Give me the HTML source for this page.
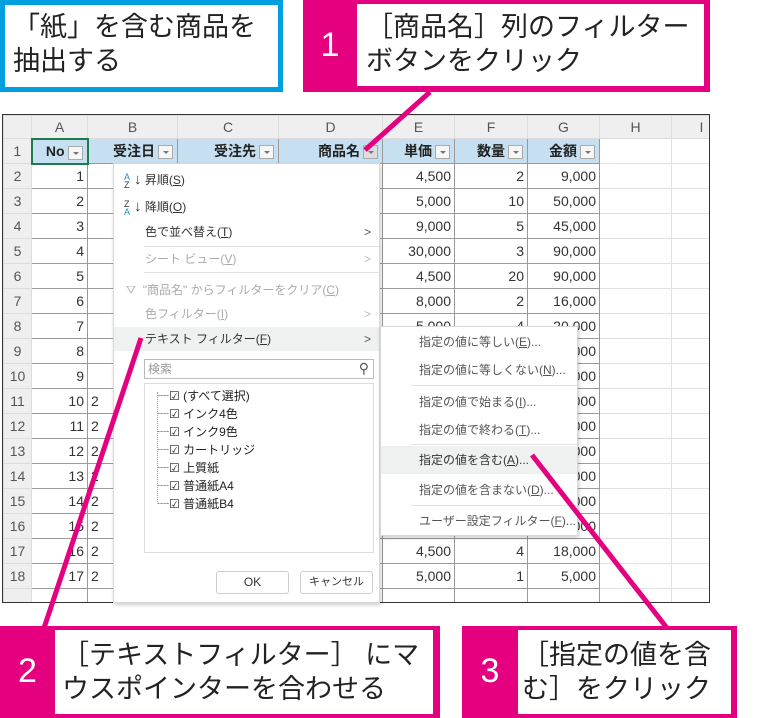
<!DOCTYPE html>
<html><head><meta charset="utf-8">
<style>
*{margin:0;padding:0;box-sizing:border-box}
body{width:783px;height:718px;background:#fff;position:relative;overflow:hidden;font-family:"Liberation Sans","Noto Sans CJK JP",sans-serif;color:#222}
.abs{position:absolute}
.sheet{position:absolute;left:2px;top:114px;width:708px;height:489px;border:1px solid #333;overflow:hidden;background:#fff}
table{border-collapse:collapse;table-layout:fixed;position:absolute;left:0;top:0;width:728px}
td{height:25px;border:1px solid #9a9a9a;font-size:14px;text-align:right;padding-right:3px;white-space:nowrap;overflow:hidden;color:#333}
tr.ch td{height:23px;background:#efefef;border:1px solid #dcdcdc;text-align:center;color:#555;font-size:14px;padding:0}
td.rh{background:#efefef;border-color:#dcdcdc;text-align:center;color:#555;padding:0}
td.e{border-color:#e2e2e2}
tr.h1 td.hd{background:#c7e0f1;font-weight:bold;color:#222;padding-right:22px;position:relative}
.fb{position:absolute;right:4px;top:6px;width:15px;height:14px;border:1px solid #aaa;background:#f6f6f6}
.fb:after{content:"";position:absolute;left:4px;top:5px;border-left:3px solid transparent;border-right:3px solid transparent;border-top:3px solid #777}
.menu{position:absolute;background:#fff;border:1px solid #d8d8d8;box-shadow:1px 2px 4px rgba(0,0,0,.2);font-size:12px;color:#333}
.it{position:absolute;left:0;right:0;height:24px;line-height:24px}
.dis{color:#aaa}
.arr{position:absolute;right:8px;top:0;color:#555;font-size:12px}
.sep{position:absolute;height:1px;background:#e2e2e2}
.co{position:absolute;font-size:27px;line-height:34px;color:#222;font-family:"Liberation Sans","Noto Sans CJK JP",sans-serif}
.num{position:absolute;color:#fff;font-size:34px;text-align:center}
</style></head><body>

<div class="abs" style="left:0;top:0;width:283px;height:92px;border:5px solid #009fe0"></div>
<div class="co" style="left:13px;top:10px">「紙」を含む商品を<br>抽出する</div>

<div class="abs" style="left:303px;top:0;width:407px;height:92px;background:#e4007f"></div>
<div class="abs" style="left:357px;top:4px;width:347px;height:82px;background:#fff"></div>
<div class="num" style="left:303px;top:26px;width:54px">1</div>
<div class="co" style="left:366px;top:10px">［商品名］列のフィルター<br>ボタンをクリック</div>

<div class="sheet">
<table>
<colgroup><col style="width:28px"><col style="width:56px"><col style="width:90px"><col style="width:101px"><col style="width:104px"><col style="width:72px"><col style="width:73px"><col style="width:72px"><col style="width:72px"><col style="width:60px"></colgroup>
<tr class="ch"><td></td><td>A</td><td>B</td><td>C</td><td>D</td><td>E</td><td>F</td><td>G</td><td>H</td><td>I</td></tr>
<tr class="h1"><td class="rh">1</td><td class="hd" style="border:2px solid #1f7a4c">No<span class="fb"></span></td><td class="hd">受注日<span class="fb"></span></td><td class="hd">受注先<span class="fb"></span></td><td class="hd">商品名<span class="fb" style="background:#ddd"></span></td><td class="hd">単価<span class="fb"></span></td><td class="hd">数量<span class="fb"></span></td><td class="hd">金額<span class="fb"></span></td><td class="e"></td><td class="e"></td></tr>
<tr><td class="rh">2</td><td>1</td><td></td><td></td><td></td><td>4,500</td><td>2</td><td>9,000</td><td class="e"></td><td class="e"></td></tr>
<tr><td class="rh">3</td><td>2</td><td></td><td></td><td></td><td>5,000</td><td>10</td><td>50,000</td><td class="e"></td><td class="e"></td></tr>
<tr><td class="rh">4</td><td>3</td><td></td><td></td><td></td><td>9,000</td><td>5</td><td>45,000</td><td class="e"></td><td class="e"></td></tr>
<tr><td class="rh">5</td><td>4</td><td></td><td></td><td></td><td>30,000</td><td>3</td><td>90,000</td><td class="e"></td><td class="e"></td></tr>
<tr><td class="rh">6</td><td>5</td><td></td><td></td><td></td><td>4,500</td><td>20</td><td>90,000</td><td class="e"></td><td class="e"></td></tr>
<tr><td class="rh">7</td><td>6</td><td></td><td></td><td></td><td>8,000</td><td>2</td><td>16,000</td><td class="e"></td><td class="e"></td></tr>
<tr><td class="rh">8</td><td>7</td><td></td><td></td><td></td><td>5,000</td><td>4</td><td>20,000</td><td class="e"></td><td class="e"></td></tr>
<tr><td class="rh">9</td><td>8</td><td></td><td></td><td></td><td></td><td></td><td>10,000</td><td class="e"></td><td class="e"></td></tr>
<tr><td class="rh">10</td><td>9</td><td></td><td></td><td></td><td></td><td></td><td>10,000</td><td class="e"></td><td class="e"></td></tr>
<tr><td class="rh">11</td><td>10</td><td style="text-align:left;padding-left:3px">2</td><td></td><td></td><td></td><td></td><td>10,000</td><td class="e"></td><td class="e"></td></tr>
<tr><td class="rh">12</td><td>11</td><td style="text-align:left;padding-left:3px">2</td><td></td><td></td><td></td><td></td><td>10,000</td><td class="e"></td><td class="e"></td></tr>
<tr><td class="rh">13</td><td>12</td><td style="text-align:left;padding-left:3px">2</td><td></td><td></td><td></td><td></td><td>10,000</td><td class="e"></td><td class="e"></td></tr>
<tr><td class="rh">14</td><td>13</td><td style="text-align:left;padding-left:3px">2</td><td></td><td></td><td></td><td></td><td>10,000</td><td class="e"></td><td class="e"></td></tr>
<tr><td class="rh">15</td><td>14</td><td style="text-align:left;padding-left:3px">2</td><td></td><td></td><td></td><td></td><td>10,000</td><td class="e"></td><td class="e"></td></tr>
<tr><td class="rh">16</td><td>15</td><td style="text-align:left;padding-left:3px">2</td><td></td><td></td><td></td><td></td><td>10,000</td><td class="e"></td><td class="e"></td></tr>
<tr><td class="rh">17</td><td>16</td><td style="text-align:left;padding-left:3px">2</td><td></td><td></td><td>4,500</td><td>4</td><td>18,000</td><td class="e"></td><td class="e"></td></tr>
<tr><td class="rh">18</td><td>17</td><td style="text-align:left;padding-left:3px">2</td><td></td><td></td><td>5,000</td><td>1</td><td>5,000</td><td class="e"></td><td class="e"></td></tr>
<tr><td class="rh"></td><td></td><td></td><td></td><td></td><td></td><td></td><td></td><td class="e"></td><td class="e"></td></tr>
</table>
</div>

<div class="menu" style="left:113px;top:163px;width:267px;height:440px">
 <div class="it" style="top:4px;left:10px"><span style="font-size:9px;color:#1a8fd0;display:inline-block;line-height:8px;vertical-align:middle;width:10px">A<br><span style="color:#333">Z</span></span><span style="font-size:15px">↓</span> 昇順(<u>S</u>)</div>
 <div class="it" style="top:31px;left:10px"><span style="font-size:9px;color:#333;display:inline-block;line-height:8px;vertical-align:middle;width:10px">Z<br><span style="color:#1a8fd0">A</span></span><span style="font-size:15px">↓</span> 降順(<u>O</u>)</div>
 <div class="it" style="top:56px;padding-left:31px">色で並べ替え(<u>T</u>)<span class="arr">&gt;</span></div>
 <div class="sep" style="top:82px;left:30px;right:0"></div>
 <div class="it dis" style="top:83px;padding-left:31px">シート ビュー(<u>V</u>)<span class="arr" style="color:#bbb">&gt;</span></div>
 <div class="sep" style="top:108px;left:30px;right:0"></div>
 <div class="it dis" style="top:114px;padding-left:12px"><span style="color:#bbb">⛛</span>&nbsp; "商品名" からフィルターをクリア(<u>C</u>)</div>
 <div class="it dis" style="top:138px;padding-left:31px">色フィルター(<u>I</u>)<span class="arr" style="color:#bbb">&gt;</span></div>
 <div class="it" style="top:163px;padding-left:31px;background:#eef1ef">テキスト フィルター(<u>F</u>)<span class="arr">&gt;</span></div>
 <div class="abs" style="left:30px;top:195px;width:230px;height:20px;border:1px solid #bbb;font-size:12px;color:#999;padding-left:3px;line-height:18px">検索<span style="position:absolute;right:4px;top:-1px;color:#555;font-size:14px">⚲</span></div>
 <div class="abs" style="left:30px;top:219px;width:230px;height:170px;border:1px solid #ddd;font-size:12px;line-height:18px;color:#222">
  <div style="position:absolute;left:12px;top:8px;width:1px;height:110px;border-left:1px dotted #999"></div>
  <div style="padding:3px 0 0 12px">
   <div>┈☑ (すべて選択)</div>
   <div>┈☑ インク4色</div>
   <div>┈☑ インク9色</div>
   <div>┈☑ カートリッジ</div>
   <div>┈☑ 上質紙</div>
   <div>┈☑ 普通紙A4</div>
   <div>┈☑ 普通紙B4</div>
  </div>
 </div>
 <div class="abs" style="left:102px;top:407px;width:73px;height:23px;border:1px solid #ccc;border-radius:3px;text-align:center;line-height:21px;font-size:12px">OK</div>
 <div class="abs" style="left:186px;top:407px;width:73px;height:23px;border:1px solid #ccc;border-radius:3px;text-align:center;line-height:21px;font-size:11px">キャンセル</div>
</div>

<div class="menu" style="left:380px;top:326px;width:198px;height:210px;color:#555">
 <div class="it" style="top:3px;padding-left:38px">指定の値に等しい(<u>E</u>)...</div>
 <div class="it" style="top:31px;padding-left:38px">指定の値に等しくない(<u>N</u>)...</div>
 <div class="sep" style="top:58px;left:30px;right:0"></div>
 <div class="it" style="top:63px;padding-left:38px">指定の値で始まる(<u>I</u>)...</div>
 <div class="it" style="top:91px;padding-left:38px">指定の値で終わる(<u>T</u>)...</div>
 <div class="sep" style="top:117px;left:30px;right:0"></div>
 <div class="it" style="top:119px;height:28px;line-height:28px;padding-left:38px;background:#eef1ef;color:#333">指定の値を含む(<u>A</u>)...</div>
 <div class="it" style="top:151px;padding-left:38px">指定の値を含まない(<u>D</u>)...</div>
 <div class="sep" style="top:178px;left:30px;right:0"></div>
 <div class="it" style="top:182px;padding-left:38px">ユーザー設定フィルター(<u>F</u>)...</div>
</div>

<svg class="abs" style="left:0;top:0" width="783" height="718">
 <g stroke="#e4007f" stroke-width="5" fill="none">
  <line x1="430" y1="92" x2="365" y2="150"/>
  <line x1="141" y1="338" x2="44" y2="628"/>
  <line x1="532" y1="455" x2="667" y2="628"/>
 </g>
</svg>

<div class="abs" style="left:0;top:626px;width:440px;height:92px;background:#e4007f"></div>
<div class="abs" style="left:55px;top:630px;width:378px;height:84px;background:#fff"></div>
<div class="num" style="left:0;top:652px;width:55px">2</div>
<div class="co" style="left:62px;top:638px">［テキストフィルター］ にマ<br>ウスポインターを合わせる</div>

<div class="abs" style="left:462px;top:626px;width:275px;height:92px;background:#e4007f"></div>
<div class="abs" style="left:518px;top:630px;width:213px;height:84px;background:#fff"></div>
<div class="num" style="left:462px;top:652px;width:56px">3</div>
<div class="co" style="left:522px;top:638px">［指定の値を含<br>む］をクリック</div>
</body></html>
